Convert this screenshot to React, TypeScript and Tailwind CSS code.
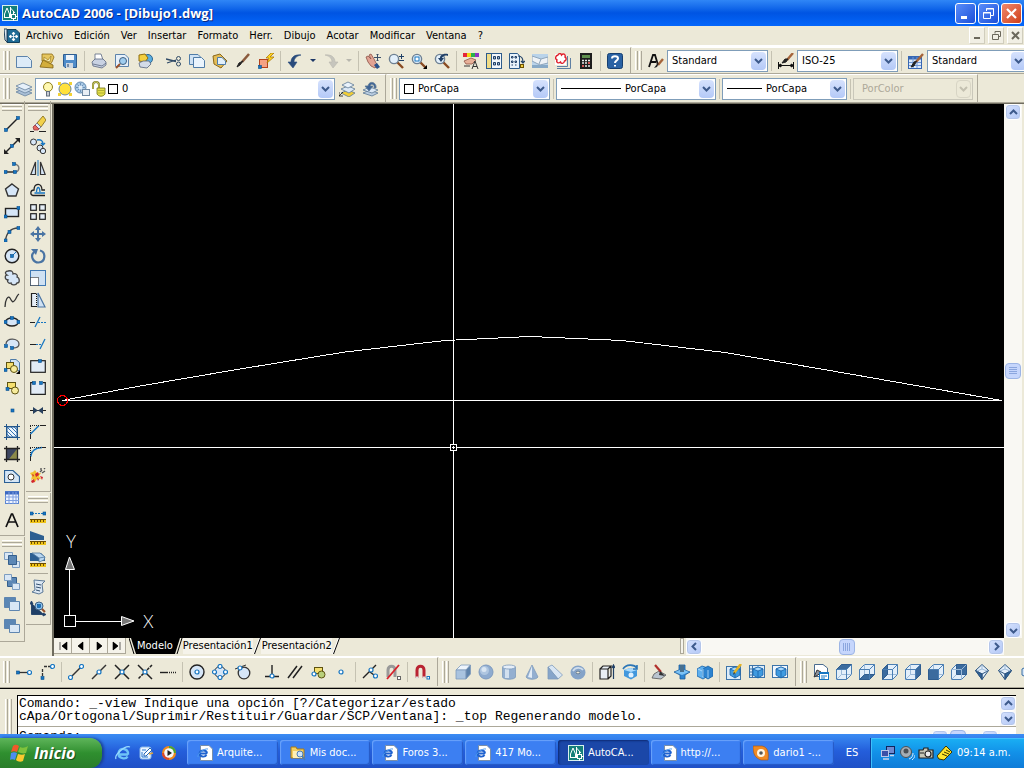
import type { ReactNode } from 'react';

const NAVY = '#1f3f66';
const BLUE = '#1676c2';
const STEEL = '#4a74a3';
const PALE = '#d6e6f7';

// small square grip used by most of the drawing icons
const Dot = ({ x, y }: { x: number; y: number }) => (
  <rect x={x - 1.5} y={y - 1.5} width="3" height="3" fill={BLUE} stroke="#0b4f8c" strokeWidth="0.6" />
);

const Ring = ({ x, y }: { x: number; y: number }) => (
  <circle cx={x} cy={y} r="2" fill="#fff" stroke={BLUE} strokeWidth="1.2" />
);

const Cube = ({ face }: { face: string }) => {
  const faces: Record<string, string> = {
    top: 'M.5 5.5L5.5 .5H15.5L10.5 5.5Z',
    bottom: 'M.5 15.5L5.5 10.5H15.5L10.5 15.5Z',
    left: 'M.5 5.5L5.5 .5V10.5L.5 15.5Z',
    right: 'M10.5 5.5L15.5 .5V10.5L10.5 15.5Z',
    front: 'M.5 5.5H10.5V15.5H.5Z',
    back: 'M5.5 .5H15.5V10.5H5.5Z',
  };
  return (
    <g stroke="#4a7eb3">
      <path d="M.5 5.5L5.5 .5H15.5V10.5L10.5 15.5H.5Z" fill="#e3effa" />
      <path d="M5.5 .5V10.5H15.5M5.5 10.5L.5 15.5" stroke="#9dbbd9" />
      <path d={faces[face]} fill="#3b6b9e" stroke="#2f5d8f" />
      <path d="M.5 5.5H10.5V15.5M10.5 5.5L15.5 .5" stroke={face === 'back' ? '#9dbbd9' : '#4a7eb3'} />
    </g>
  );
};

const Diamond = ({ side }: { side: string }) => (
  <g stroke="#2c5580">
    <path d="M8 .5L14.500 6.500L8 15.500L1.500 6.500Z" fill="#e6f0fa" />
    <path d={side === 'left' ? 'M1.500 6.500L8 10V15.500Z' : 'M14.500 6.500L8 10V15.500Z'} fill="#2f6399" />
    <path d="M1.500 6.500L8 10L14.500 6.500M8 10V15" />
    <path d="M8 1V5L3 7M8 5L13 7" stroke="#9dbbd9" />
  </g>
);

const Sheets = ({ dark, light }: { dark: string; light: string }) => (
  <g stroke="#5f86b0">
    <path d={dark} fill="#5b87b5" />
    <path d={light} fill="#d9e7f5" />
  </g>
);

const Ruler = () => (
  <g>
    <rect x="0" y="11" width="16" height="4" fill="#f0c419" stroke="none" />
    <path d="M0 11.5H16M1.5 12V14M4.5 12V14M7.5 12V14M10.5 12V14M13.5 12V14" stroke="#6b4b00" />
  </g>
);

const Lens = () => (
  <g>
    <path d="M9 9L15 15" stroke="#8a4b22" strokeWidth="2.4" />
    <circle cx="6" cy="6" r="4.6" fill="#e3f0fb" stroke="#6d8093" strokeWidth="1.4" />
  </g>
);

const Brush = () => (
  <g>
    <path d="M15 1L8 9" stroke="#a5643a" strokeWidth="2.4" />
    <path d="M8.500 8L6 13L3 14L6 9Z" fill="#222" stroke="#222" />
  </g>
);

const EdgeCube = () => (
  <g stroke="#1762a8" strokeWidth="0.8">
    <path d="M4 5L9 3L14 5V11L9 14L4 11Z" fill="#3f9be0" />
    <path d="M4 5L9 7L14 5L9 3Z" fill="#a9dbff" />
    <path d="M9 7V14" />
  </g>
);

const icons: Record<string, ReactNode> = {
  nuevo: <path d="M.5 3.500H11.500L15.500 7.500V14.500H.5Z" fill="#dcebf8" stroke="#5c83ab" />,
  abrir: (
    <g>
      <path d="M3 1L13 1L15 4L13 9L9 14L3 8Z" fill="#e6c65f" stroke="#8d6b16" strokeWidth=".8" />
      <path d="M5 4L9 7L12 3L11 9L5 7Z" fill="#f9efb8" stroke="#a8892d" strokeWidth=".8" />
      <path d="M1 14L4 7L14 12V15Z" fill="#d3ae3c" stroke="#7d5f12" strokeWidth=".8" />
    </g>
  ),
  guardar: (
    <g>
      <path d="M1.500 1.500H14.500V14.500H3L1.500 13Z" fill="#4f8cc9" stroke="#2e5d91" />
      <rect x="4" y="2" width="8" height="5" fill="#eef4fa" />
      <rect x="4" y="10" width="7" height="5" fill="#cfd8e2" />
      <path d="M6 11V14" stroke={NAVY} />
    </g>
  ),
  imprimir: (
    <g stroke="#5a6780" strokeWidth=".8">
      <path d="M4 8L4 1H10L12 7" fill="#fff" />
      <path d="M1 9L4 6H12L15 9V12L11 15L2 13Z" fill="#c9d2e3" />
      <path d="M2 11L11 13L15 10" />
    </g>
  ),
  previa: (
    <g>
      <path d="M1.500 1.500H11L14.500 5V13.500H1.500Z" fill="#e6f0fa" stroke="#5c83ab" />
      <circle cx="9" cy="8" r="3.500" fill="#9fcdf0" stroke="#41607f" />
      <path d="M6 11L2 15" stroke="#98502a" strokeWidth="2" />
    </g>
  ),
  publicar: (
    <g>
      <circle cx="11" cy="6" r="4.500" fill="#5aaee0" stroke="#2d6591" />
      <path d="M2 2L8 1L11 5L8 9L2 8Z" fill="#f3cf3f" stroke="#8f6e10" />
      <path d="M2 10L6 8H12L14 11L10 15L3 14Z" fill="#d3dbe8" stroke="#56657d" strokeWidth=".8" />
    </g>
  ),
  cortar: (
    <g stroke="#2f4a66">
      <path d="M0 6L10 8.500M1 10L10 7" strokeWidth="1.300" />
      <circle cx="12.500" cy="5.500" r="2" />
      <circle cx="12.500" cy="11" r="2" />
    </g>
  ),
  copiar: (
    <g stroke="#4f7ca8">
      <path d="M.5 1.500H9L11.500 4V11.500H.5Z" fill="#cfe2f4" />
      <path d="M4.500 4.500H12.500L15.500 7.500V14.500H4.500Z" fill="#eaf4fd" />
    </g>
  ),
  pegar: (
    <g>
      <path d="M1 3L8 1L15 8L9 15L2 11Z" fill="#e4bd57" stroke="#8c6818" />
      <path d="M5.500 4.500H10L13.500 8V11.500H5.500Z" fill="#e1effb" stroke="#4f7ca8" />
    </g>
  ),
  igualar: (
    <g>
      <path d="M14 1L7 9" stroke="#8a5a3c" strokeWidth="2.500" />
      <path d="M8 8L5 12L2 14L4 10Z" fill="#222" stroke="#222" />
    </g>
  ),
  bloque: (
    <g>
      <rect x="1.500" y="6.500" width="8" height="8" fill="#f4a184" stroke="#b3411c" />
      <path d="M13 0L8 5H11L9 10L16 4H12L16 0Z" fill="#ffd51f" stroke="#a36f00" strokeWidth=".7" />
      <Dot x={2} y={14} />
    </g>
  ),
  deshacer: (
    <path d="M14 2C7 1 4 5 4 9H1L6 15L10 9H7C7 6 9 3 14 2Z" fill="#294b7c" stroke="#294b7c" strokeWidth=".6" />
  ),
  rehacer: (
    <path d="M2 2C9 1 12 5 12 9H15L10 15L6 9H9C9 6 7 3 2 2Z" fill="#c6c5bd" stroke="#b8b7ae" strokeWidth=".6" />
  ),
  encuadre: (
    <g>
      <path d="M1 4L3 3L6 6L4 2L6 1L9 6L11 10L13 12L10 15L6 13L3 9Z" fill="#e2a393" stroke="#8d5245" strokeWidth=".8" />
      <path d="M9 12L12 10L15 14L12 16Z" fill="#29518a" />
      <path d="M12.500 1V8M9 4.500H16M11.500 2L12.500 1L13.500 2M11.500 7L12.500 8L13.500 7" stroke="#3a4f68" />
    </g>
  ),
  zoomreal: (
    <g>
      <Lens />
      <path d="M11 3.500H16M13.500 1V6M11 7.500H16" stroke={NAVY} />
    </g>
  ),
  zoomventana: (
    <g>
      <Lens />
      <rect x="4" y="4" width="4" height="4" fill="#fff" stroke={BLUE} />
      <path d="M16 12V16H12Z" fill="#000" />
    </g>
  ),
  zoomprevio: (
    <g>
      <Lens />
      <path d="M14 1C8 0 6 3 6 5H4L7 9L10 5H8C9 3 11 2 14 3Z" fill={NAVY} />
    </g>
  ),
  propiedades: (
    <g>
      <rect x="0" y="0" width="4" height="4" fill="#e5263a" />
      <rect x="4" y="0" width="4" height="4" fill="#f3d512" />
      <rect x="8" y="0" width="4" height="4" fill="#28b14c" />
      <rect x="12" y="0" width="4" height="4" fill="#8b34c6" />
      <path d="M1 8L8 5L13 7L9 11L3 11Z" fill="#e8b199" stroke="#8d5245" strokeWidth=".8" />
      <path d="M1 13H7M9 16L12 8L15 16M10 13.500H14" stroke="#333" />
    </g>
  ),
  centro: (
    <g>
      <rect x=".5" y=".5" width="15" height="15" fill="#f2f7fc" stroke="#2d5b8b" />
      <rect x="1" y="1" width="4" height="14" fill="#f0dc85" />
      <path d="M5.500 1V15" stroke="#2d5b8b" />
      <path d="M7.500 3.500H9.500V6H7.500ZM11.500 3.500H13.500V6H11.500ZM7.500 9.500H9.500V12H7.500ZM11.500 9.500H13.500V12H11.500Z" fill="#9fb7d0" stroke={NAVY} />
    </g>
  ),
  paletas: (
    <g>
      <path d="M.5 .5H8.500L10.500 3V15.500H.5Z" fill="#e8f2fb" stroke="#2d5b8b" />
      <path d="M2.500 3.500H4V5H2.500ZM6 3.500H7.500V5H6ZM2.500 8H4V9.500H2.500ZM6 8H7.500V9.500H6ZM2.500 12H4M6 12H7.500" stroke={NAVY} />
      <path d="M9 3C13 3 14 5 14 9M12 8L14 10L16 8" stroke={NAVY} strokeWidth="1.200" />
      <rect x="11.500" y="11.500" width="3" height="3" fill="#f3cf3f" stroke="#6e5300" />
    </g>
  ),
  planos: (
    <g>
      <rect x="0" y="1" width="16" height="14" fill="#b9d3ea" />
      <path d="M0 3L9 6L16 4V10L8 12L0 8Z" fill="#eef2f6" stroke="#8ea5bb" />
      <path d="M9 6L7 11" stroke="#8ea5bb" />
      <path d="M0 12H16V15H0Z" fill="#87a9c7" />
    </g>
  ),
  marcas: (
    <g>
      <path d="M2 13.500H12.500V3M2 15.500H15.500V5" stroke="#5e7fa3" />
      <rect x="0" y="1" width="11" height="11" fill="#fff" />
      <path d="M3 2C4 0 6 0 6.500 2C8 0 11 1 10 4C12 5 11 8 9.500 8C9 11 6 11 5.500 9C3 11 1 9 2 7C0 6 0 3 3 2Z" stroke="#e0202c" strokeWidth="1.400" />
    </g>
  ),
  calculadora: (
    <g>
      <rect x="2" y="0" width="12" height="16" fill="#1d1d1d" />
      <rect x="4" y="2" width="8" height="3" fill="#5f8f4d" />
      <path d="M4 7.500H12M4 10H12M4 13H12" stroke="#e9e9e9" strokeWidth="1.600" strokeDasharray="2 1" />
      <path d="M10 10H12M4 13H6" stroke="#d33" strokeWidth="1.600" />
    </g>
  ),
  ayuda: (
    <g>
      <rect x=".5" y=".5" width="15" height="15" rx="2" fill="#2a62a4" stroke="#173f70" />
      <path d="M5 5.500C5 2.500 11 2.500 11 5.500C11 7.500 8 7.500 8 10M8 12V13.500" stroke="#fff" strokeWidth="2" />
    </g>
  ),
  estilotexto: (
    <g>
      <path d="M1 14L5 2H7L10 12M3 9H8" stroke="#111" strokeWidth="1.800" />
      <path d="M15 6L10 12" stroke="#a5643a" strokeWidth="2.400" />
      <path d="M11 10L9 14L6 15L9 11Z" fill="#222" />
    </g>
  ),
  estilocota: (
    <g>
      <path d="M0 12.500H16M.5 9V16M15.500 9V16M0 12.500L3 11V14ZM16 12.500L13 11V14Z" stroke="#111" fill="#111" />
      <path d="M15 0L9 7" stroke="#a5643a" strokeWidth="2.400" />
      <path d="M10 6L8 9L4 10L7 6Z" fill="#222" stroke="#222" />
    </g>
  ),
  estilotabla: (
    <g>
      <rect x=".5" y="3.500" width="13" height="12" fill="#dbe9fa" stroke="#3767b3" />
      <path d="M1 5H13" stroke="#3767b3" strokeWidth="3" />
      <path d="M1 9.500H13M1 12.500H13M5 4V15M9 4V15" stroke="#6f96d6" />
      <Brush />
    </g>
  ),
  capas: (
    <g stroke="#6783a0" strokeWidth=".8">
      <path d="M0 11L7 8L16 12L9 15Z" fill="#a9bfd6" />
      <path d="M0 8L7 5L16 9L9 12Z" fill="#c6d7e8" />
      <path d="M0 5L7 2L16 6L9 9Z" fill="#e6f0fa" />
    </g>
  ),
  capaactual: (
    <g stroke="#5d7894" strokeWidth=".8">
      <path d="M2 12L9 9L16 12L10 16Z" fill="#f1cd35" />
      <path d="M2 8L9 5L16 8L10 12Z" fill="#dbe8f5" />
      <path d="M3 4L9 1L15 4L9 7Z" fill="#e9f2fb" />
      <path d="M0 15L4 11M0 11V15H4" stroke="#111" />
    </g>
  ),
  capaprevia: (
    <g stroke="#5d7894" strokeWidth=".8">
      <path d="M1 12L8 9L16 12L10 15Z" fill="#b9cce0" />
      <path d="M1 9L8 6L16 9L10 12Z" fill="#dbe8f5" />
      <path d="M14 7C15 1 7 -1 6 5H3L7 10L11 5H8C9 2 13 3 12 7Z" fill="#3d6496" />
    </g>
  ),
  linea: (
    <g>
      <path d="M2 14L14 2" stroke="#222" strokeWidth="1.400" />
      <Dot x={2} y={14} />
      <Dot x={14} y={2} />
    </g>
  ),
  auxiliar: (
    <g>
      <path d="M1 15L15 1" stroke="#222" strokeWidth="1.400" />
      <path d="M0 16V11L5 16ZM16 0V5L11 0Z" fill="#222" />
      <Dot x={8} y={8} />
    </g>
  ),
  polilinea: (
    <g>
      <path d="M2 12H10" stroke="#222" strokeWidth="1.400" />
      <path d="M10 12C16 13 17 4 10 4" stroke="#777" strokeWidth="1.400" />
      <Dot x={1.500} y={12} />
      <Dot x={11} y={12} />
      <Dot x={10} y={4} />
    </g>
  ),
  poligono: <path d="M8 2L14.500 7L12 14H4L1.500 7Z" fill={PALE} stroke="#333" strokeWidth="1.400" />,
  rectangulo: (
    <g>
      <rect x="1.500" y="4.500" width="13" height="8" fill={PALE} stroke="#222" strokeWidth="1.400" />
      <Dot x={1.500} y={12.500} />
      <Dot x={14.500} y={4} />
    </g>
  ),
  arco: (
    <g>
      <path d="M1.500 15C2 7 7 2 14 2" stroke="#444" strokeWidth="1.400" />
      <Dot x={1.500} y={14.500} />
      <Dot x={5.500} y={6} />
      <Dot x={14.500} y={2} />
    </g>
  ),
  circulo: (
    <g>
      <circle cx="8" cy="8" r="6.800" fill={PALE} stroke="#222" strokeWidth="1.400" />
      <path d="M8 8L12 4" stroke={BLUE} />
      <Dot x={8} y={8} />
    </g>
  ),
  nube: (
    <path d="M4 1C8 0 9 2 9 4C12 3 14 5 13 7C16 8 16 13 13 13C12 16 7 15 7 13C4 14 3 11 4 10C0 9 1 5 3 5C0 3 2 1 4 1Z" fill={PALE} stroke="#444" strokeWidth="1.300" />
  ),
  spline: <path d="M1 15C1 8 4 3 6 6C8 10 9 11 11 8C13 5 13 3 15 2" stroke="#333" strokeWidth="1.300" />,
  elipse: (
    <g>
      <ellipse cx="8" cy="8" rx="6.500" ry="4" fill={PALE} stroke="#222" strokeWidth="1.300" />
      <Dot x={1.500} y={8} />
      <Dot x={14.500} y={8} />
      <Dot x={8} y={4} />
    </g>
  ),
  arcoelipse: (
    <g>
      <path d="M2 8C2 1 15 2 15 8C15 11 12 12 9 12" fill={PALE} stroke="#555" strokeWidth="1.300" />
      <Dot x={2} y={10} />
      <Dot x={8} y={12} />
    </g>
  ),
  insertar: (
    <g>
      <path d="M6.500 1.500H12L15.500 4.500V12.500H6.500Z" fill="#cfe2f4" stroke="#4f7ca8" />
      <rect x="2.500" y="4.500" width="7" height="6" fill="#f5df6e" stroke="#5e5310" />
      <circle cx="10" cy="11" r="3.500" fill="#f7ec9c" stroke="#5e5310" />
      <Dot x={1.500} y={12} />
      <path d="M16 12V16H12Z" fill="#000" />
    </g>
  ),
  crearbloque: (
    <g>
      <rect x="3.500" y="2.500" width="8" height="6" fill="#f5df6e" stroke="#5e5310" />
      <circle cx="11" cy="10.500" r="3.500" fill="#f7ec9c" stroke="#5e5310" />
      <Dot x={3.500} y={9} />
    </g>
  ),
  punto: <Dot x={8.500} y={8.500} />,
  sombreado: (
    <g>
      <rect x="3" y="3" width="10" height="10" fill="#eef6fd" stroke="#2b5f94" />
      <path d="M3 3L13 13M3 7L9 13M7 3L13 9M3 10L6 13M10 3L13 6" stroke="#3674b3" />
      <path d="M0 2.500H16M0 13.500H16M2.500 0V16M13.500 0V16" stroke="#24568a" />
    </g>
  ),
  degradado: (
    <g>
      <rect x="3" y="3" width="10" height="10" fill="#3c4660" />
      <path d="M13 3V13H5Z" fill="#8c8a4a" />
      <path d="M0 2.500H16M0 13.500H16M2.500 0V16M13.500 0V16" stroke="#222" strokeWidth="1.300" />
    </g>
  ),
  region: (
    <g>
      <path d="M.5 2.500H9L15.500 8.500V14.500H.5Z" fill="#d5e6f6" stroke="#2b5f94" strokeWidth="1.200" />
      <circle cx="7" cy="9" r="3" fill="#fff" stroke="#333" />
    </g>
  ),
  tabla: (
    <g>
      <rect x="1.500" y="1.500" width="13" height="12" fill="#eef4ff" stroke="#5c86d1" />
      <path d="M1 3H15" stroke="#3c68c0" strokeWidth="3" />
      <path d="M1 7H15M1 10.500H15M5 2V14M9 2V14M12 2V14" stroke="#7e9fe0" />
    </g>
  ),
  textom: <path d="M2 15L7.500 2H8.500L14 15M4 10H12" stroke="#111" strokeWidth="1.700" />,
  borra: (
    <g>
      <path d="M13 0L7 7L11 11L16 4Z" fill="#f2d14a" stroke="#7e6412" strokeWidth=".8" />
      <path d="M7 7L5 9L9 13L11 11Z" fill="#dce8f4" stroke="#667" strokeWidth=".8" />
      <path d="M5 9L3 11L4 14H8L9 13Z" fill="#e66a5e" stroke="#934" strokeWidth=".8" />
      <path d="M0 15.500H4M9 15.500H16" stroke="#222" />
    </g>
  ),
  copiaobj: (
    <g stroke="#333">
      <circle cx="3.500" cy="4" r="3" fill={PALE} />
      <circle cx="10" cy="10" r="3" fill={PALE} />
      <circle cx="13" cy="13" r="2.700" fill={PALE} />
      <path d="M7 2C11 1 13 3 13 6M11 5L13 7L15 5" stroke={BLUE} strokeWidth="1.400" />
    </g>
  ),
  simetria: (
    <g>
      <path d="M5.500 2V14.500H.8Z M10.500 2V14.500H15.200Z" fill={PALE} stroke="#333" strokeWidth="1.200" />
      <path d="M8 0V16" stroke={BLUE} />
    </g>
  ),
  desfase: (
    <g strokeWidth="1.300">
      <path d="M15 13.500H3C0 13 0 8 4 8C4 1 12 0 12 8H15" stroke="#222" />
      <path d="M15 11H4.500M6.500 10C7 4 9.500 4 10 10" stroke={BLUE} />
    </g>
  ),
  matriz: (
    <g fill="#e6eef7" stroke="#222" strokeWidth="1.200">
      <rect x=".7" y=".7" width="5.600" height="5.600" />
      <rect x="9.700" y=".7" width="5.600" height="5.600" />
      <rect x=".7" y="9.700" width="5.600" height="5.600" />
      <rect x="9.700" y="9.700" width="5.600" height="5.600" />
    </g>
  ),
  desplaza: (
    <path d="M8 0L11 4H9V7H12V5L16 8L12 11V9H9V12H11L8 16L5 12H7V9H4V11L0 8L4 5V7H7V4H5Z" fill={STEEL} />
  ),
  gira: (
    <g>
      <path d="M4 4C0 8 3 14.500 8.500 14.500C16 14 16 4 10 2.500" stroke={STEEL} strokeWidth="2.200" />
      <path d="M1 1L8 1L6 7Z" fill={STEEL} />
    </g>
  ),
  escala: (
    <g>
      <rect x=".5" y=".5" width="15" height="15" fill="#cfe1f3" stroke="#3f78b3" />
      <rect x=".5" y="7.500" width="8" height="8" fill="#fff" stroke="#111" strokeDasharray="1 1" />
    </g>
  ),
  estira: (
    <g>
      <path d="M6.500 1.500H1.500V14.500H6.500" fill="#e6eef7" stroke="#222" strokeWidth="1.200" />
      <path d="M8 1L15 15H8Z" fill="#cfe1f3" stroke={STEEL} strokeWidth="1.200" />
      <path d="M6.500 2V15" stroke="#111" strokeDasharray="1 1" />
    </g>
  ),
  recorta: (
    <g>
      <path d="M0 8.500H5" stroke="#222" />
      <path d="M5 13L10 3" stroke={BLUE} strokeWidth="1.300" />
      <path d="M8 8.500H16" stroke={BLUE} strokeDasharray="2 1" />
    </g>
  ),
  alarga: (
    <g>
      <path d="M0 8.500H6" stroke="#222" />
      <path d="M10 13L15 3" stroke={BLUE} strokeWidth="1.300" />
      <path d="M6 8.500H12" stroke={BLUE} strokeDasharray="2 1" />
    </g>
  ),
  partepunto: (
    <g>
      <rect x=".7" y="2.700" width="14.600" height="11.600" fill="#e2ebf5" stroke="#222" strokeWidth="1.200" />
      <Dot x={10} y={3} />
    </g>
  ),
  parte: (
    <g>
      <path d="M3 2.700H.7V14.300H15.300V2.700H13" fill="#e2ebf5" stroke="#222" strokeWidth="1.200" />
      <Dot x={4} y={3} />
      <Dot x={11} y={3} />
    </g>
  ),
  une: (
    <g>
      <path d="M0 8.500H16" stroke="#222" />
      <path d="M3 5L8 8.500L3 12ZM13 5L8 8.500L13 12Z" fill="#29415e" />
    </g>
  ),
  chaflan: (
    <g>
      <path d="M.5 15V10M10 1.500H16" stroke="#222" />
      <path d="M.5 10L9 1.500" stroke={BLUE} strokeWidth="1.500" />
      <path d="M0 1.500H9M.5 2V10" stroke="#222" strokeDasharray="1 1" />
    </g>
  ),
  empalme: (
    <g>
      <path d="M.5 15V11M12 1.500H16" stroke="#222" />
      <path d="M.5 11C1 5 5 2 12 1.500" stroke={BLUE} strokeWidth="1.500" />
      <path d="M0 1.500H12M.5 2V11" stroke="#222" strokeDasharray="1 1" />
    </g>
  ),
  descompone: (
    <g>
      <path d="M0 5L3 4L5 2L7 5L11 5L9 8L11 11L7 11L5 14L3 11L1 12L2 8Z" fill="#f2c230" />
      <path d="M1 13L4 11L5 14L2 15ZM5 6L8 4L9 7L6 9ZM10 8L13 9L12 12ZM2 6L4 7L3 9ZM7 10L9 11L8 13Z" fill="#d3262c" />
      <path d="M10 4L12 2M12 5L15 3M11 2L11 0M14 1L15 0" stroke="#555" strokeWidth="1.400" />
    </g>
  ),
  distancia: (
    <g>
      <path d="M2 5.500H14" stroke={BLUE} strokeDasharray="2 1" />
      <Dot x={1.500} y={5.500} />
      <Dot x={14.500} y={5.500} />
      <Ruler />
    </g>
  ),
  area: (
    <g>
      <path d="M0 1L14 6V10H0Z" fill="#2d5f91" />
      <Ruler />
    </g>
  ),
  masa: (
    <g>
      <path d="M0 1L11 1L15 5V9H0Z" fill="#2d5f91" />
      <path d="M2 1H10L15 5L14 8L9 10V6Z" fill="#b9d6ef" stroke="#51799f" strokeWidth=".8" />
      <path d="M9 6L15 5" stroke="#51799f" strokeWidth=".8" />
      <Ruler />
    </g>
  ),
  lista: (
    <g>
      <path d="M4 1L15 2L12 5L13 13L9 15L2 13L5 11Z" fill="#dbe7f3" stroke="#5b7896" />
      <path d="M6 5L11 6M6 8L11 9M6 11L10 12" stroke="#34516f" />
    </g>
  ),
  coordenada: (
    <g>
      <path d="M1.500 2V13.500H14M1.500 0L0 3H3ZM16 13.500L13 12V15ZM2 13L6 9" stroke={NAVY} fill={NAVY} strokeWidth=".9" />
      <circle cx="9" cy="5" r="4" fill="#8dc3ee" stroke="#41607f" />
      <path d="M12 8L15 11" stroke="#98502a" strokeWidth="2" />
      <Dot x={9} y={5} />
    </g>
  ),
  delante: (
    <g>
      <path d="M.5 .5H8.500V7.500H.5ZM8.500 9.500H15.500V15.500H8.500Z" fill="#d9e7f5" stroke="#7c9dc0" />
      <path d="M4.500 3.500H12.500V12.500H4.500Z" fill="#5b87b5" stroke="#355f8c" />
    </g>
  ),
  detras: (
    <g>
      <path d="M3.500 3.500H12.500V12.500H3.500Z" fill="#5b87b5" stroke="#355f8c" />
      <path d="M.5 .5H7.500V6.500H.5ZM8.500 9.500H15.500V15.500H8.500Z" fill="#d9e7f5" stroke="#7c9dc0" />
    </g>
  ),
  encima: <Sheets light="M5.500 5.500H15.500V14.500H5.500Z" dark="M.5 1.500H11.500V11.500H.5Z" />,
  debajo: <Sheets dark="M.5 1.500H11.500V10.500H.5Z" light="M5.500 6.500H15.500V14.500H5.500Z" />,
  rastreo: (
    <g>
      <path d="M2 8.500H12" stroke="#333" strokeWidth="1.300" />
      <Dot x={2} y={8.500} />
      <Ring x={13.500} y={8.500} />
    </g>
  ),
  desde: (
    <g>
      <path d="M3.500 12V4M5 2.500H11" stroke="#333" strokeDasharray="3 1" strokeWidth="1.300" />
      <Dot x={3.500} y={14} />
      <Ring x={13.500} y={2.500} />
    </g>
  ),
  fin: (
    <g>
      <path d="M3 13L13 3" stroke="#333" strokeWidth="1.400" />
      <Ring x={2.500} y={13.500} />
      <Ring x={13.500} y={2.500} />
    </g>
  ),
  medio: (
    <g>
      <path d="M1 15L15 1" stroke="#333" strokeWidth="1.400" />
      <Ring x={8} y={8} />
    </g>
  ),
  inter: (
    <g>
      <path d="M1 1L15 15M15 1L1 15" stroke="#222" strokeWidth="1.500" />
      <Ring x={8} y={8} />
    </g>
  ),
  ficticia: (
    <g>
      <path d="M1 1L15 15" stroke="#222" strokeWidth="1.500" />
      <path d="M15 1L1 15" stroke="#222" strokeWidth="1.500" strokeDasharray="3 1" />
      <Ring x={8} y={8} />
    </g>
  ),
  extension: (
    <g>
      <path d="M0 8.500H8" stroke="#222" strokeWidth="1.400" />
      <path d="M9 8.500H16" stroke="#222" strokeDasharray="1 1" strokeWidth="1.400" />
    </g>
  ),
  centrocirc: (
    <g>
      <circle cx="8" cy="8" r="7" fill={PALE} stroke="#222" strokeWidth="1.400" />
      <Ring x={8} y={8} />
    </g>
  ),
  cuadrante: (
    <g>
      <circle cx="8" cy="8" r="5.500" fill={PALE} stroke="#333" />
      <Ring x={8} y={2.500} />
      <Ring x={2.500} y={8} />
      <Ring x={13.500} y={8} />
      <Ring x={8} y={13.500} />
    </g>
  ),
  tangente: (
    <g>
      <circle cx="9" cy="9" r="5.800" fill={PALE} stroke="#333" strokeWidth="1.300" />
      <path d="M0 5L11 1" stroke="#333" />
      <Ring x={5} y={4} />
    </g>
  ),
  perpendicular: (
    <g>
      <path d="M8 1V12M1 12.500H15" stroke="#222" strokeWidth="1.400" />
      <Ring x={8} y={12} />
    </g>
  ),
  paralelo: <path d="M1 14L10 2M6 14L15 2" stroke="#222" strokeWidth="1.500" />,
  insercion: (
    <g>
      <rect x="4.500" y="3.500" width="8" height="6" fill="#f5df6e" stroke="#5e5310" />
      <circle cx="11.500" cy="10.500" r="3.500" fill="#b8cf7a" stroke="#5e5310" />
      <Ring x={4} y={10} />
    </g>
  ),
  nodo: <Ring x={8} y={8} />,
  cercano: (
    <g>
      <path d="M1 14L7 8L14 1M8 8L12 11" stroke="#222" strokeWidth="1.400" />
      <Ring x={9} y={6} />
      <Ring x={13.500} y={12} />
    </g>
  ),
  ninguno: (
    <g>
      <path d="M3 13V6C3 1 10 1 10 6V13" stroke="#999" strokeWidth="3" />
      <path d="M14 1L2 15" stroke="#d8202a" strokeWidth="1.800" />
      <rect x="12.500" y="12.500" width="3" height="3" fill="#fff" stroke="#666" />
    </g>
  ),
  iman: (
    <g>
      <path d="M3 14V6C3 1 10 1 10 6V14" stroke="#b92332" strokeWidth="3" />
      <path d="M1.500 13.500H4.500M8.500 13.500H11.500" stroke="#ddd" strokeWidth="2" />
      <rect x="13" y="12.500" width="2.500" height="2.500" fill="#fff" stroke={BLUE} />
    </g>
  ),
  caja: (
    <g stroke="#7e9bbb" strokeWidth=".8">
      <path d="M1 6L6 1H15.500L11 6Z" fill="#eef5fc" />
      <path d="M1 6H11V15H1Z" fill="#a9c3df" />
      <path d="M11 6L15.500 1V10L11 15Z" fill="#5f83ab" />
    </g>
  ),
  esfera: (
    <g>
      <circle cx="8" cy="8" r="7" fill="#8eabcf" stroke="#7d9abf" />
      <circle cx="6.500" cy="6.500" r="4.500" fill="#afc6e0" />
      <circle cx="6" cy="5.500" r="2.500" fill="#d9e6f3" />
    </g>
  ),
  cilindro: (
    <g stroke="#7e9bbb" strokeWidth=".8">
      <path d="M1.500 3V13C2 16 14 16 14.500 13V3Z" fill="#93afd0" />
      <path d="M4 5V14H8V5Z" fill="#d2e0ef" stroke="none" />
      <ellipse cx="8" cy="3" rx="6.500" ry="2" fill="#e5eef8" />
    </g>
  ),
  cono: (
    <g stroke="#7e9bbb" strokeWidth=".8">
      <path d="M8 1L14 13C12 16 4 16 2 13Z" fill="#93afd0" />
      <path d="M8 2L8 14L4 13Z" fill="#e2ecf6" stroke="none" />
    </g>
  ),
  cuna: (
    <g stroke="#7e9bbb" strokeWidth=".8">
      <path d="M1 3L5 1L15.500 11L11 15Z" fill="#d9e6f3" />
      <path d="M1 3V15H11Z" fill="#86a5ca" />
    </g>
  ),
  toroide: (
    <g>
      <ellipse cx="8" cy="8.500" rx="5" ry="4.500" stroke="#84a3c8" strokeWidth="5" />
      <path d="M3 7C5 3 11 3 13 6" stroke="#cfddec" strokeWidth="1.800" />
      <ellipse cx="8" cy="8.500" rx="2" ry="1.500" stroke="#49688f" />
    </g>
  ),
  extrusion: (
    <g stroke="#222" strokeWidth="1.200">
      <path d="M1 5H9V15H1ZM1 5L4 2H12L9 5M12 2V12L9 15" fill="#e8eef5" />
      <path d="M14.500 15V2M13 4L14.500 1L16 4" stroke={NAVY} />
    </g>
  ),
  revolucion: (
    <g>
      <path d="M2 6L8 4L15 6V12L9 15.500L2 12Z" fill="#4298dd" />
      <path d="M2 6L9 8L15 6L8 4Z" fill="#a9dbff" />
      <circle cx="9" cy="11" r="2.500" fill="#dff1ff" />
      <path d="M1 5C4 0 12 0 15 4M15 1V5H11" stroke="#2b76b8" strokeWidth="1.600" />
    </g>
  ),
  corte: (
    <g>
      <path d="M3 10L8 7L15 11L10 15L1 14Z" fill="#b9c4cf" stroke="#555" strokeWidth=".8" />
      <path d="M4 1L10 8" stroke="#b2302c" strokeWidth="2.200" />
      <path d="M9 7L14 12L8 11Z" fill="#333" />
    </g>
  ),
  seccion: (
    <g>
      <path d="M5 1H11V6L16 8L11 11V15H6V11L0 8L5 6Z" fill="#2f86d2" stroke="#1c5c99" strokeWidth=".8" />
      <path d="M1 8L8 5L15 8L8 11Z" fill="#7cc2f5" />
      <path d="M6 1H10V8H6Z" fill="#48708f" />
    </g>
  ),
  interferencia: (
    <g stroke="#1762a8" strokeWidth=".8">
      <path d="M0 5L5 2L11 4V12L6 15L0 12Z" fill="#5fb0ee" />
      <path d="M6 5L11 2L16 5V12L11 15L6 12Z" fill="#2c83cf" />
      <path d="M6 5V13M11 6V14M1 5L5 7" stroke="#bfe3ff" />
    </g>
  ),
  dibujosol: (
    <g>
      <rect x=".5" y="2.500" width="14" height="13" fill="#dcecf8" stroke="#3c74a9" />
      <EdgeCube />
      <path d="M15 0L8 9" stroke="#e6b422" strokeWidth="2.600" />
      <path d="M8 8L7 11L9 9Z" fill="#222" />
    </g>
  ),
  vistasol: (
    <g>
      <rect x=".5" y="1.500" width="15" height="12" fill="#dcecf8" stroke="#3c74a9" />
      <path d="M3.500 2V13M1 5H3M1 8H3M1 11H3" stroke="#3c74a9" />
      <EdgeCube />
    </g>
  ),
  perfilsol: (
    <g>
      <rect x=".5" y="1.500" width="15" height="12" fill="#f0f7fd" stroke="#3c74a9" />
      <EdgeCube />
    </g>
  ),
  vistas: (
    <g>
      <path d="M1.500 .5H10L14.500 4V12.500H1.500Z" fill="#fff" stroke="#4a6c90" />
      <path d="M1 13L4 6L8 8L5 11Z" fill="#8c929a" stroke="#333" />
      <rect x="6.500" y="8.500" width="9" height="7" fill="#fff" stroke={BLUE} />
      <path d="M7 9.500H15M8 12H14M8 14H12" stroke={BLUE} />
    </g>
  ),
  vsup: <Cube face="top" />,
  vinf: <Cube face="bottom" />,
  vizq: <Cube face="left" />,
  vder: <Cube face="right" />,
  vfront: <Cube face="front" />,
  vpost: <Cube face="back" />,
  iso1: <Diamond side="left" />,
  iso2: <Diamond side="right" />,
  iso3: <path d="M2 5L8 2L14 5V11L8 14L2 11Z" fill={PALE} stroke="#3a6ea5" />,
  bombilla: (
    <g>
      <circle cx="8" cy="6" r="4.500" fill="#fff8b0" stroke="#8f7f1c" />
      <rect x="6.500" y="10.500" width="3" height="4.500" fill="#c8cdd6" stroke="#65707f" />
    </g>
  ),
  sol: (
    <g>
      <path d="M1 1H4V4H1ZM12 1H15V4H12ZM1 12H4V15H1ZM12 12H15V15H12Z" fill="#f2d233" />
      <circle cx="8" cy="8" r="6" fill="#ffe13a" stroke="#6b86a0" />
    </g>
  ),
  inutil: (
    <g>
      <circle cx="6.500" cy="6.500" r="5.500" fill="#a9c9e6" stroke="#5d86ad" />
      <path d="M2 6.500H11M6.500 2V11M3.500 3.500L9.500 9.500M9.500 3.500L3.500 9.500" stroke="#6f93b8" />
      <circle cx="6.500" cy="6.500" r="2" fill="#e2edf7" />
      <rect x="8.500" y="8.500" width="7" height="6" fill="#e8eef5" stroke="#7089a3" />
    </g>
  ),
  candado: (
    <g>
      <path d="M2 8V4C2 0 8 0 8 4V7" stroke="#7b7d22" strokeWidth="2" />
      <path d="M2 8V4C2 0 8 0 8 4V7" stroke="#e3e07a" strokeWidth=".8" />
      <path d="M6 7H14V13C12 16 8 16 6 13Z" fill="#e4e04a" stroke="#6f701a" strokeWidth=".8" />
      <path d="M7 9.500H13M7 12H13" stroke="#a3a433" strokeWidth=".8" />
    </g>
  ),
  ie: (
    <g>
      <path d="M13 9.500H4.500M13 9.500C14 3 4 1.500 3.500 8.500C3.500 14 11 14.500 12.500 11.500" stroke="#6fc3f7" strokeWidth="2.400" />
      <path d="M1 14C-1 10 10 0 15 2" stroke="#9bdcff" strokeWidth="1.200" />
    </g>
  ),
  escritorio: (
    <g>
      <rect x="2" y="2" width="11" height="12" rx="2" fill="#e9f4ff" stroke="#8dbbe8" />
      <path d="M6 9L12 3L14 5L8 11L6 11Z" fill="#fff" stroke="#2466b4" />
      <path d="M4 5H8M4 7V12H10" stroke="#2f7bd0" />
      <path d="M11 9L15 8" stroke="#e2a33a" strokeWidth="1.500" />
    </g>
  ),
  media: (
    <g>
      <circle cx="8" cy="8" r="7" fill="#f08a1c" />
      <path d="M8 1A7 7 0 0 1 15 8H8Z" fill="#4aa532" />
      <path d="M8 15A7 7 0 0 1 1 8H8Z" fill="#d8472a" />
      <circle cx="8" cy="8" r="4.800" fill="#f5f8fb" />
      <path d="M6.500 5L11 8L6.500 11Z" fill="#222" />
    </g>
  ),
  pagina: (
    <g>
      <path d="M3.500 .5H12L15.500 4V15.500H3.500Z" fill="#fff" stroke="#7a8ea8" />
      <path d="M10 8.500H3.500M10 8.500C10 4.500 3 4.500 2.500 8.500C2.500 12 8 12.500 9.500 10" stroke="#1f62cf" strokeWidth="1.900" />
      <path d="M1 12C0 9 7 3 11 4" stroke="#4d9bf0" />
    </g>
  ),
  carpeta: (
    <g>
      <path d="M1 2H6L7 4H14V13H1Z" fill="#f5cf5f" stroke="#a77a18" />
      <path d="M3 6H12V13H3Z" fill="#fff0b5" />
      <circle cx="10" cy="9" r="3" fill="#cfe5fa" stroke="#4b7db5" />
      <path d="M12 11L15 15" stroke="#4b7db5" strokeWidth="1.600" />
    </g>
  ),
  autocad: (
    <g>
      <rect x=".5" y=".5" width="15" height="15" fill="#147f7a" stroke="#d8f0ee" />
      <path d="M2.500 12V9L5 3L7.500 9V12M8.500 2V12M8.500 3L13 8M2 12.500H9" stroke="#fff" />
      <rect x="9.500" y="9.500" width="4" height="4" fill="#147f7a" stroke="#fff" />
      <path d="M11.500 6V9M11.500 14V16M14 11.500H16" stroke="#fff" />
    </g>
  ),
  documento: (
    <g>
      <path d="M3 1.500H12L15.500 5V14.500H3Z" fill="#1d6a94" stroke="#123f5c" />
      <path d="M0 1H3V14L1 12Z" fill="#dfeaf2" stroke="#20435e" />
      <path d="M9.500 4V13M5 8.500H14M9.500 4L8 6H11ZM9.500 13L8 11H11ZM5 8.500L7 7V10ZM14 8.500L12 7V10Z" stroke="#fff" fill="#fff" strokeWidth=".8" />
    </g>
  ),
  avast: (
    <g>
      <path d="M0 1L9 1C15 2 16 8 15 15L8 15C2 13 0 9 0 1Z" fill="#f08a24" stroke="#a9530b" strokeWidth=".6" />
      <circle cx="8" cy="8" r="4" fill="#fff5e2" />
      <circle cx="8" cy="8" r="1.800" fill="#555" />
    </g>
  ),
  red: (
    <g stroke="#10245c">
      <rect x="6.500" y="1.500" width="8" height="7" fill="#6f8ad0" />
      <rect x="1.500" y="5.500" width="7" height="6" fill="#3a50a8" stroke="#b9c6e8" />
      <path d="M3 14H9M10 10.500H14" stroke="#c9d4ee" strokeWidth="1.600" />
    </g>
  ),
  volumen: (
    <g>
      <circle cx="7" cy="7" r="5.500" fill="#a6adb4" stroke="#4c5257" />
      <circle cx="7" cy="6" r="2.500" fill="#4a4f55" />
      <path d="M10 14C13 13 14 11 14 8M13 15C15 13 16 12 16 10" stroke="#d7e9fb" />
    </g>
  ),
  camara: (
    <g>
      <path d="M1 5H5L6 3H10V5H15V13H1Z" fill="#c8c8b8" stroke="#222" strokeWidth="1.200" />
      <circle cx="10" cy="9" r="3" fill="#eee" stroke="#222" strokeWidth="1.200" />
      <path d="M2 8H6" stroke="#222" />
    </g>
  ),
  etiqueta: (
    <g>
      <path d="M0 11L9 1L15 7L7 15L2 14Z" fill="#ffe52e" stroke="#3d3700" />
      <path d="M5 9L10 11M7 7L12 9M9 5L13 7" stroke="#3d3700" />
    </g>
  ),
};

const Icon = ({ name }: { name: string }) => (
  <svg viewBox="0 0 16 16" fill="none" className="h-4 w-4 shrink-0" aria-hidden="true">
    {icons[name]}
  </svg>
);

const Chevron = ({ dir, color = '#3d5a8c' }: { dir: 'up' | 'down' | 'left' | 'right'; color?: string }) => {
  const d = { up: 'M1 6L4.5 2.5L8 6', down: 'M1 3L4.5 6.5L8 3', left: 'M6 1L2.5 4.5L6 8', right: 'M3 1L6.5 4.5L3 8' }[dir];
  return (
    <svg viewBox="0 0 9 9" fill="none" className="h-[9px] w-[9px]" aria-hidden="true">
      <path d={d} stroke={color} strokeWidth="2" />
    </svg>
  );
};

// '|' is a separator, '_' a plain gap, 'v' the little history arrow
function Tools({ items, vertical = false }: { items: string; vertical?: boolean }) {
  return (
    <>
      {items.split(' ').map((name, i) => {
        if (name === '|') {
          return vertical ? (
            <span key={i} className="my-[2px] h-px w-5 bg-[#aca899]" />
          ) : (
            <span key={i} className="flex w-[6px] shrink-0 justify-center">
              <span className="h-5 w-px bg-[#c5c2b2]" />
            </span>
          );
        }
        if (name === '_') return <span key={i} className="w-[6px] shrink-0" />;
        if (name === 'v') {
          return (
            <button key={i} aria-label="Lista" className="flex w-[13px] shrink-0 items-center justify-center">
              <svg viewBox="0 0 6 4" className="w-[6px]" aria-hidden="true">
                <path d="M0 0H6L3 3Z" fill={items.split(' ')[i - 1] === 'rehacer' ? '#b8b7ae' : '#1c3766'} />
              </svg>
            </button>
          );
        }
        return (
          <button key={i} aria-label={name} className="flex h-[22px] w-[23px] shrink-0 items-center justify-center">
            <Icon name={name} />
          </button>
        );
      })}
    </>
  );
}

const Grip = () => (
  <span className="flex w-3 shrink-0 items-center justify-center gap-px self-stretch py-[3px]">
    <span className="h-full w-[3px] border-r border-l border-l-white border-r-[#aca899]" />
    <span className="h-full w-[3px] border-r border-l border-l-white border-r-[#aca899]" />
  </span>
);

const GripH = () => (
  <span className="flex h-3 w-full shrink-0 flex-col items-center justify-end gap-px pb-[2px]">
    <span className="h-[3px] w-5 border-t border-b border-t-white border-b-[#aca899]" />
    <span className="h-[3px] w-5 border-t border-b border-t-white border-b-[#aca899]" />
  </span>
);

function Bar({ children, last = false }: { children: ReactNode; last?: boolean }) {
  return (
    <div
      role="toolbar"
      className={
        last
          ? 'flex min-w-0 flex-1 items-center overflow-hidden border-t border-t-white'
          : 'mr-px flex shrink-0 items-center border-t border-r border-t-white border-r-[#aca899] pr-1'
      }
    >
      <Grip />
      {children}
    </div>
  );
}

function VBar({ items }: { items: string }) {
  return (
    <div role="toolbar" className="flex w-[25px] flex-col items-center border-r border-b border-[#aca899] pb-[4px]">
      <GripH />
      <Tools items={items} vertical />
    </div>
  );
}

function Combo({
  label,
  value,
  width,
  lead,
  disabled = false,
}: {
  label: string;
  value: string;
  width: string;
  lead?: ReactNode;
  disabled?: boolean;
}) {
  return (
    <div
      className={`${width} relative flex h-[22px] shrink-0 items-center border pl-1 ${
        disabled ? 'border-[#c9c7ba] bg-[#ece9d8] pl-2 text-[#aca899]' : 'border-[#7f9db9] bg-white'
      }`}
    >
      {lead}
      <select
        aria-label={label}
        disabled={disabled}
        className="h-full min-w-0 flex-1 appearance-none bg-transparent pr-4 outline-none"
      >
        <option>{value}</option>
      </select>
      <span
        className={`pointer-events-none absolute top-px right-px bottom-px flex w-[15px] items-center justify-center rounded-sm ${
          disabled ? 'border border-[#d8d5c5]' : 'bg-linear-to-b from-[#d6e2fd] to-[#b4c9f7]'
        }`}
      >
        <Chevron dir="down" color={disabled ? '#c3c0b0' : '#3d5a8c'} />
      </span>
    </div>
  );
}

const Swatch = () => <span className="mr-1 h-[10px] w-[10px] shrink-0 border border-black bg-white" />;

function ScrollButton({ dir, className = 'h-4 w-4' }: { dir: 'up' | 'down' | 'left' | 'right'; className?: string }) {
  return (
    <button
      aria-label={dir}
      className={`${className} flex shrink-0 items-center justify-center rounded-sm border border-white bg-linear-to-br from-[#d5e1fd] to-[#b3c8f6] ring-1 ring-[#b5c6ea] ring-inset`}
    >
      <Chevron dir={dir} />
    </button>
  );
}

const Thumb = ({ vertical = false }: { vertical?: boolean }) => (
  <span className="flex h-4 w-4 shrink-0 items-center justify-center rounded-sm border border-[#9db5e5] bg-[#c6d6fc]">
    <svg viewBox="0 0 8 8" className="h-2 w-2" aria-hidden="true">
      <path d={vertical ? 'M0 .5H8M0 2.5H8M0 4.5H8M0 6.5H8' : 'M.5 0V8M2.5 0V8M4.5 0V8M6.5 0V8'} stroke="#8ba6de" />
    </svg>
  </span>
);

const menus = ['Archivo', 'Edición', 'Ver', 'Insertar', 'Formato', 'Herr.', 'Dibujo', 'Acotar', 'Modificar', 'Ventana', '?'];

const tasks = [
  { icon: 'pagina', text: 'Arquite...' },
  { icon: 'carpeta', text: 'Mis doc...' },
  { icon: 'pagina', text: 'Foros 3...' },
  { icon: 'pagina', text: '417 Mo...' },
  { icon: 'autocad', text: 'AutoCA...', active: true },
  { icon: 'pagina', text: 'http://...' },
  { icon: 'avast', text: 'dario1 -...' },
];

function TitleBar() {
  const box = 'flex h-[21px] w-[21px] items-center justify-center rounded-[3px] border border-white';
  return (
    <header className="flex h-[26px] shrink-0 items-center bg-linear-to-b from-[#2f86f6] via-[#0054e3] to-[#0567fb] pr-[2px] pl-[2px] text-white">
      <Icon name="autocad" />
      <h1 className="flex-1 pl-1 font-['Open_Sans',sans-serif] text-[13px] font-bold [text-shadow:1px_1px_#0a2a80]">
        AutoCAD 2006 - [Dibujo1.dwg]
      </h1>
      <div className="flex gap-[2px]">
        <button aria-label="Minimizar" className={`${box} bg-linear-to-br from-[#5a8dfa] to-[#1c4ed8]`}>
          <svg viewBox="0 0 13 13" className="h-[13px] w-[13px]"><path d="M2 9H8V12H2Z" fill="#fff" /></svg>
        </button>
        <button aria-label="Restaurar" className={`${box} bg-linear-to-br from-[#5a8dfa] to-[#1c4ed8]`}>
          <svg viewBox="0 0 13 13" fill="none" className="h-[13px] w-[13px]">
            <path d="M4.500 4V1.500H11.500V8.500H9M4 2H12M1.500 5.500H8.500V11.500H1.500ZM1 6H9" stroke="#fff" />
          </svg>
        </button>
        <button aria-label="Cerrar" className={`${box} bg-linear-to-br from-[#f0876a] to-[#cf3d12]`}>
          <svg viewBox="0 0 13 13" className="h-[13px] w-[13px]"><path d="M2 2L11 11M11 2L2 11" stroke="#fff" strokeWidth="2.200" /></svg>
        </button>
      </div>
    </header>
  );
}

function MenuBar() {
  const box = 'flex h-[17px] w-4 items-center justify-center border border-t-white border-l-white border-r-[#d0cdbd] border-b-[#d0cdbd] bg-[#f1efe4]';
  return (
    <nav className="flex h-[21px] shrink-0 items-center border-b-2 border-white pl-1">
      <Icon name="documento" />
      <ul className="flex flex-1 gap-[11px] pl-[6px]">
        {menus.map(m => (
          <li key={m}>
            <button>{m}</button>
          </li>
        ))}
      </ul>
      <div className="flex gap-[3px] pr-px">
        <button aria-label="Minimizar dibujo" className={box}>
          <svg viewBox="0 0 9 9" className="h-[9px] w-[9px]"><path d="M1 6H7V8H1Z" fill="#6b685b" /></svg>
        </button>
        <button aria-label="Restaurar dibujo" className={box}>
          <svg viewBox="0 0 9 9" fill="none" className="h-[9px] w-[9px]">
            <path d="M3 2.500V.5H8.500V5.500H7M.5 3.500H6.500V8.500H.5Z" stroke="#6b685b" />
          </svg>
        </button>
        <button aria-label="Cerrar dibujo" className={box}>
          <svg viewBox="0 0 9 9" className="h-[9px] w-[9px]"><path d="M1 1L8 8M8 1L1 8" stroke="#6b685b" strokeWidth="2" /></svg>
        </button>
      </div>
    </nav>
  );
}

function Drawing() {
  return (
    <svg viewBox="54 104 950 534" fill="none" stroke="#fff" className="block min-h-0 w-full flex-1 bg-black" shapeRendering="crispEdges">
      <path d="M453.500 104V444M453.500 451V638M54 447.500H450M457 447.500H1004M62 400.500H1002" />
      <path d="M453.500 446V449M452 447.500H455" />
      <rect x="450.500" y="444.500" width="6" height="6" />
      <path d="M62 400.500L140 386L240 369L345 352L445 340.500L530 336.500L622 340.500L725 352.500L850 374L1002 400.500" />
      <circle cx="62.500" cy="400.500" r="5" stroke="#f00" />
      <rect x="64.500" y="615.500" width="11" height="11" />
      <path d="M69.500 615V570M76 621.500H121" />
      <path d="M65.500 569.500H74.500L69.500 557Z M121.500 616.500V625.500L134 621Z" fill="#777" shapeRendering="auto" />
      <g fill="#fff" stroke="none" className="font-['Lato',sans-serif] text-[17px] font-light">
        <text x="66" y="548">Y</text>
        <text x="143" y="628">X</text>
      </g>
    </svg>
  );
}

function LayoutTabs() {
  const nav = ['M3 1V9M10 1L5 5L10 9Z', 'M8 1L3 5L8 9Z', 'M4 1L9 5L4 9Z', 'M2 1L7 5L2 9ZM9 1V9'];
  const slash = (
    <svg viewBox="0 0 8 16" fill="none" className="h-4 w-2 shrink-0" aria-hidden="true">
      <path d="M0 16H2L8 0H6Z" fill="#fff" />
      <path d="M1.500 16L7.500 0" stroke="#000" />
    </svg>
  );
  return (
    <div className="flex h-[18px] shrink-0 items-start">
      {nav.map((d, i) => (
        <button key={i} aria-label={`Ficha ${i + 1}`} className="flex h-4 w-[18px] items-center justify-center border-r border-b border-[#aca899] bg-[#f5f3ea]">
          <svg viewBox="0 0 12 10" className="h-[10px] w-3"><path d={d} fill="#000" /><path d={d} stroke="#000" strokeWidth=".6" /></svg>
        </button>
      ))}
      <svg viewBox="0 0 8 16" className="ml-[3px] h-4 w-2" aria-hidden="true">
        <path d="M2 0H8V16H7Z" fill="#000" />
        <path d="M0 0L5 16" stroke="#000" />
      </svg>
      <button className="h-4 bg-black text-white">Modelo</button>
      <svg viewBox="0 0 10 16" className="h-4 w-[10px]" aria-hidden="true">
        <path d="M0 0H7L2 16H0Z" fill="#000" />
        <path d="M4 16L9 0" stroke="#000" />
      </svg>
      <button className="h-4 bg-[#f5f3ea]">Presentación1</button>
      {slash}
      <button className="h-4 bg-[#f5f3ea] pl-px">Presentación2</button>
      {slash}
      <div className="flex h-[17px] flex-1 justify-end">
        <span className="mr-[2px] h-4 w-1 border border-[#aca899] bg-[#f5f3ea]" />
        <div className="flex h-[17px] w-[318px] items-center bg-[#f9f8f3]">
          <ScrollButton dir="left" />
          <div className="flex flex-1 justify-center pl-[3px]">
            <Thumb />
          </div>
          <ScrollButton dir="right" />
        </div>
      </div>
    </div>
  );
}

function CommandWindow() {
  return (
    <section className="flex h-[46px] shrink-0 overflow-hidden border-t border-black pt-[6px] pr-2">
      <div className="flex w-[17px] shrink-0 justify-center gap-px pt-1">
        <span className="w-[3px] border-r border-l border-l-white border-r-[#aca899]" />
        <span className="w-[3px] border-r border-l border-l-white border-r-[#aca899]" />
      </div>
      <div className="flex flex-1 flex-col border-t border-l border-black bg-white font-['Liberation_Mono',monospace] text-[13px] leading-[13px] text-black">
        <div className="flex h-[31px] shrink-0 border-b border-[#aca899]">
          <p className="flex-1 pt-px pl-px">
            Comando: _-view Indique una opción [?/Categorizar/estado
            <br />
            cApa/Ortogonal/Suprimir/Restituir/Guardar/SCP/Ventana]: _top Regenerando modelo.
          </p>
          <div className="flex w-4 flex-col bg-[#f9f8f3]">
            <ScrollButton dir="up" className="h-[15px] w-4" />
            <ScrollButton dir="down" className="h-[15px] w-4" />
          </div>
        </div>
        <div className="flex pt-[3px]">
          <label htmlFor="cmd" className="pl-px">Comando:</label>
          <input id="cmd" className="min-w-0 flex-1 outline-none" />
          <div className="mr-4 flex w-[70px] justify-between bg-[#f9f8f3] px-[2px]">
            <ScrollButton dir="left" />
            <Thumb />
            <span className="w-3" />
            <ScrollButton dir="right" />
          </div>
        </div>
      </div>
    </section>
  );
}

function TaskBar() {
  return (
    <footer className="flex h-[34px] shrink-0 items-end bg-linear-to-b from-[#3c8cf3] via-[#245edb] to-[#1f50c6] text-white">
      <button className="flex h-[30px] w-[102px] items-center gap-1 rounded-r-xl bg-linear-to-b from-[#5eb55a] via-[#2f8f2f] to-[#2a7d2a] pl-[10px] shadow-[2px_0_3px_#1a3f8f]">
        <svg viewBox="0 0 20 18" className="h-[18px] w-5" aria-hidden="true">
          <path d="M3 2C5 0 7 1 9 2L7 8C5 7 3 7 1 8Z" fill="#f2592a" />
          <path d="M10 3C12 4 15 4 18 2L16 9C13 10 11 9 8 8Z" fill="#7fc23c" />
          <path d="M1 9C3 8 5 8 7 9L5 16C3 15 1 15 0 16Z" fill="#4d8df0" />
          <path d="M8 10C11 11 13 11 15 10L13 17C11 18 8 18 6 16Z" fill="#fbc92f" />
        </svg>
        <span className="font-['Open_Sans',sans-serif] text-base font-bold italic [text-shadow:1px_1px_#1c4d1c]">Inicio</span>
      </button>
      <div className="flex h-[30px] w-[85px] items-center gap-[7px] pl-[13px]">
        {['ie', 'escritorio', 'media'].map(n => (
          <button key={n} aria-label={n}>
            <Icon name={n} />
          </button>
        ))}
      </div>
      <div className="flex h-[30px] min-w-0 flex-1 gap-[2px] pt-[2px] pb-[3px]">
        {tasks.map(t => (
          <button
            key={t.text}
            className={`flex min-w-0 flex-1 items-center gap-1 rounded-[3px] pl-[10px] ${
              t.active ? 'bg-[#1b47a8] shadow-[inset_1px_1px_2px_#0d2b74]' : 'bg-[#3c7ff2] shadow-[inset_1px_1px_1px_#6ba4fb,inset_-1px_-1px_1px_#2458c4]'
            }`}
          >
            <Icon name={t.icon} />
            <span className="truncate">{t.text}</span>
          </button>
        ))}
      </div>
      <span className="flex h-[30px] w-[36px] items-center justify-center">ES</span>
      <div className="flex h-[30px] w-[154px] items-center border-l border-[#0b3f9c] bg-linear-to-b from-[#1bb0f4] via-[#1290e8] to-[#0f7cd8] pl-[9px] shadow-[inset_1px_1px_#3fc0fb]">
        <div className="flex gap-[3px]">
          {['red', 'volumen', 'camara', 'etiqueta'].map(n => (
            <Icon key={n} name={n} />
          ))}
        </div>
        <time className="pl-1 whitespace-nowrap">09:14 a.m.</time>
      </div>
    </footer>
  );
}

export default function App() {
  return (
    <div className="flex h-screen flex-col overflow-hidden bg-[#ece9d8] font-['DejaVu_Sans_Condensed',sans-serif] text-[11px] leading-4 text-black">
      <TitleBar />
      <MenuBar />
      <div className="flex h-[27px] shrink-0 border-b border-[#aca899]">
        <Bar>
          <Tools items="nuevo abrir guardar | imprimir previa publicar _ cortar copiar pegar igualar bloque | deshacer v rehacer v | encuadre zoomreal zoomventana zoomprevio | propiedades centro paletas planos marcas calculadora | ayuda" />
        </Bar>
        <Bar last>
          <Tools items="estilotexto" />
          <Combo label="Estilo de texto" value="Standard" width="w-[101px]" />
          <Tools items="| estilocota" />
          <Combo label="Estilo de cota" value="ISO-25" width="w-[101px]" />
          <Tools items="| estilotabla" />
          <Combo label="Estilo de tabla" value="Standard" width="w-[101px]" />
        </Bar>
      </div>
      <div className="flex h-7 shrink-0">
        <Bar>
          <Tools items="capas" />
          <Combo
            label="Capa"
            value="0"
            width="w-[300px]"
            lead={
              <div className="flex items-center gap-px">
                <Icon name="bombilla" />
                <Icon name="sol" />
                <Icon name="inutil" />
                <Icon name="candado" />
                <Swatch />
              </div>
            }
          />
          <Tools items="capaactual capaprevia" />
        </Bar>
        <Bar>
          <Combo label="Color" value="PorCapa" width="w-[151px]" lead={<Swatch />} />
          <Tools items="|" />
          <Combo
            label="Tipo de línea"
            value="PorCapa"
            width="w-[160px]"
            lead={<span className="mr-1 h-px w-[60px] bg-black" />}
          />
          <Tools items="|" />
          <Combo
            label="Grosor de línea"
            value="PorCapa"
            width="w-[125px]"
            lead={<span className="mr-1 h-px w-[35px] bg-black" />}
          />
          <Tools items="|" />
          <Combo label="Estilo de trazado" value="PorColor" width="w-[120px]" disabled />
        </Bar>
      </div>
      <div className="h-[2px] shrink-0 border-t border-b border-t-[#aca899] border-b-[#6f6c5f]" />
      <main className="flex min-h-0 flex-1">
        <aside className="-mt-[3px] flex shrink-0 gap-px">
          <div className="flex flex-col gap-px">
            <VBar items="linea auxiliar polilinea poligono rectangulo arco circulo nube spline elipse arcoelipse insertar crearbloque punto sombreado degradado region tabla textom" />
            <VBar items="delante detras encima debajo" />
          </div>
          <div className="flex flex-col gap-px">
            <VBar items="borra copiaobj simetria desfase matriz desplaza gira escala estira recorta alarga partepunto parte une chaflan empalme descompone" />
            <VBar items="distancia area masa | lista coordenada" />
          </div>
        </aside>
        <section className="ml-px flex min-w-0 flex-1 flex-col border-l-2 border-[#6f6c5f]">
          <Drawing />
          <LayoutTabs />
        </section>
        <div className="mr-[2px] mb-[18px] flex w-[18px] shrink-0 flex-col items-center bg-[#f9f8f3]">
          <ScrollButton dir="up" />
          <div className="flex flex-1 items-center">
            <Thumb vertical />
          </div>
          <ScrollButton dir="down" />
        </div>
      </main>
      <div className="flex h-8 shrink-0 border-t border-b border-t-white border-b-[#aca899] pb-px">
        <Bar>
          <Tools items="rastreo desde | fin medio inter ficticia extension | centrocirc cuadrante tangente _ perpendicular paralelo insercion nodo | cercano ninguno | iman" />
        </Bar>
        <Bar>
          <Tools items="caja esfera cilindro cono cuna toroide | extrusion revolucion | corte seccion interferencia | dibujosol vistasol perfilsol" />
        </Bar>
        <Bar last>
          <Tools items="vistas vsup vinf vizq vder vfront vpost iso1 iso2 iso3" />
        </Bar>
      </div>
      <CommandWindow />
      <TaskBar />
    </div>
  );
}
